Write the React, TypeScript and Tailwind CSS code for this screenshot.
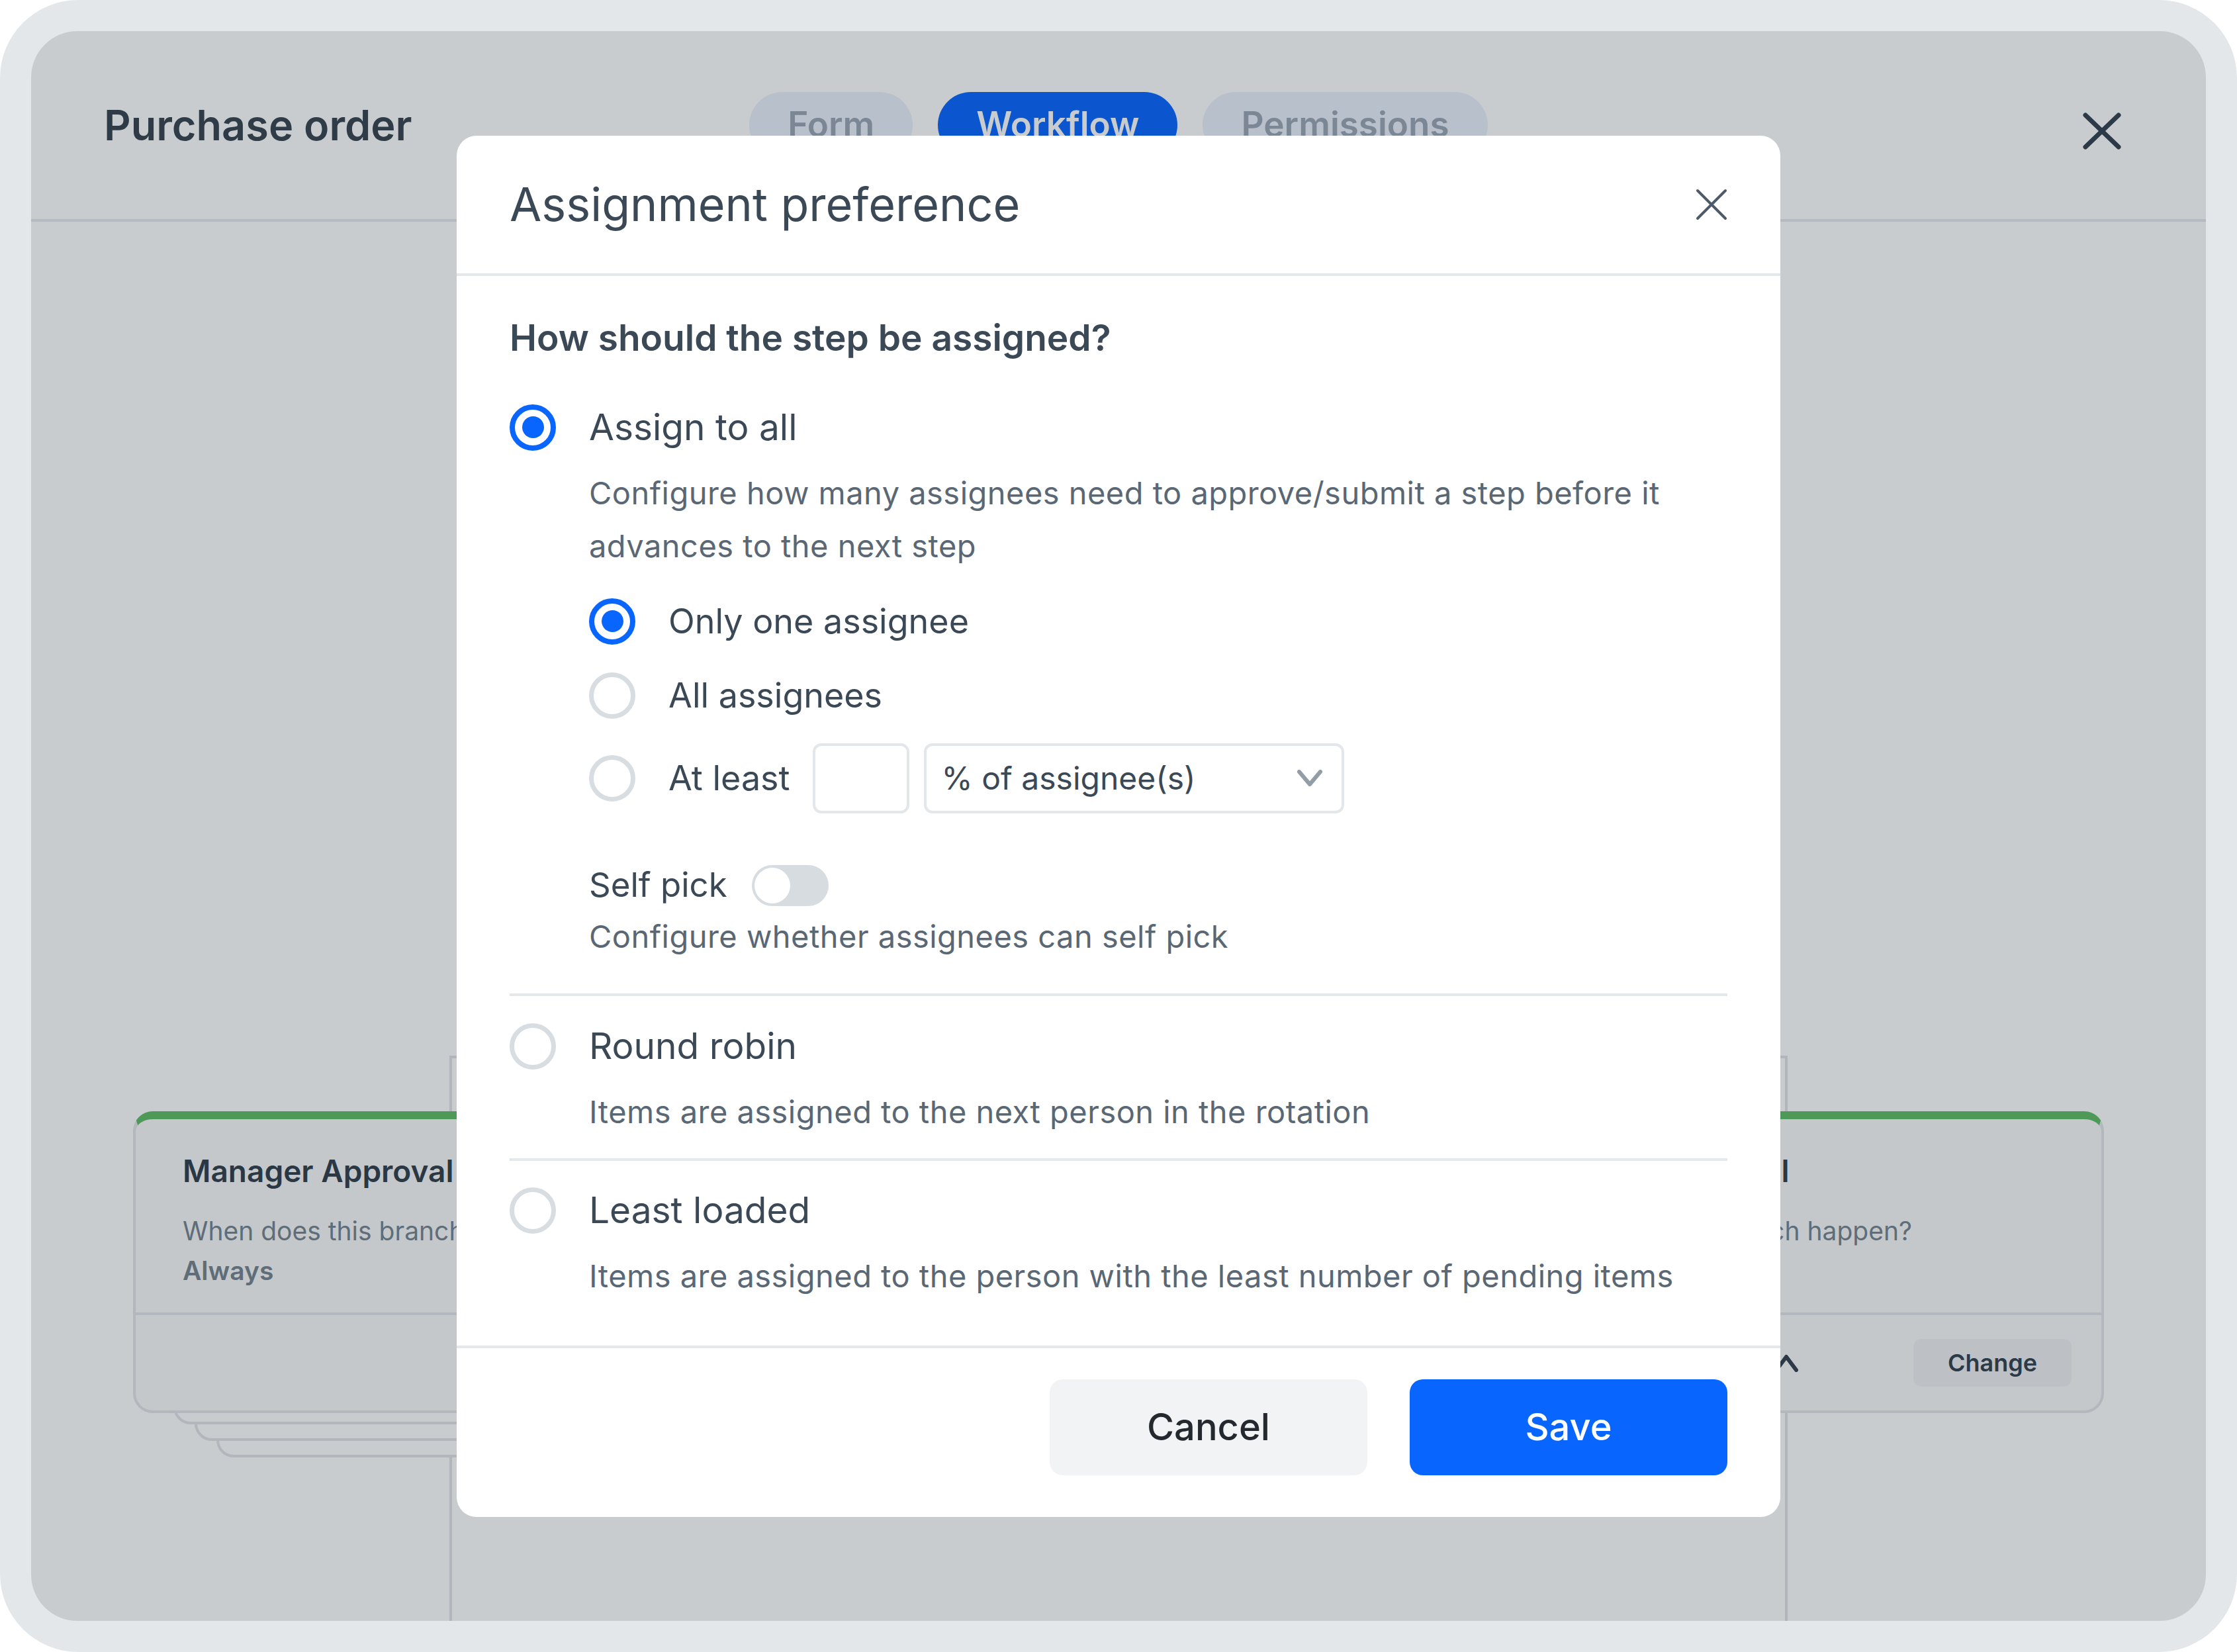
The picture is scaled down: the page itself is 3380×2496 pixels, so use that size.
import React from "react";

const Radio = ({ checked }: { checked?: boolean }) => {
    if (checked) {
        return (
            <span className="flex h-[70px] w-[70px] shrink-0 items-center justify-center rounded-full border-[8px] border-[#0866ff]">
                <span className="h-[33px] w-[33px] rounded-full bg-[#0866ff]" />
            </span>
        );
    }
    return <span className="h-[70px] w-[70px] shrink-0 rounded-full border-[7px] border-[#d8dde2] bg-white" />;
};

const Tab = ({ label, active }: { label: string; active?: boolean }) => (
    <div
        className={
            active
                ? "flex h-[100px] items-center rounded-full bg-[#0360ff] px-[58px] text-[53px] font-semibold text-white"
                : "flex h-[100px] items-center rounded-full bg-[#eaf0fa] px-[58px] text-[53px] font-semibold text-[#98a3b0]"
        }
    >
        {label}
    </div>
);

const ApprovalCard = ({ stacked, chevron }: { stacked?: boolean; chevron?: boolean }) => (
    <div className="relative z-10 mt-[84px] w-[960px]">
        {stacked && (
            <>
                <div className="absolute inset-x-[126px] top-[60px] -bottom-[67px] rounded-[26px] border-4 border-[#e0e3e7] bg-white" />
                <div className="absolute inset-x-[93px] top-[60px] -bottom-[42px] rounded-[26px] border-4 border-[#e0e3e7] bg-white" />
                <div className="absolute inset-x-[61px] top-[60px] -bottom-[17px] rounded-[26px] border-4 border-[#e0e3e7] bg-white" />
            </>
        )}
        <div className="relative rounded-[30px] border-4 border-t-[12px] border-[#e2e4e8] border-t-[#5cbb5f] bg-[#fafafa]">
            <div className="px-[71px] pt-[46px] pb-[33px]">
                <p className="text-[46px] leading-[64px] font-semibold text-[#2c3a47]">Manager Approval</p>
                <p className="mt-[29px] text-[39px] leading-[60px] text-[#73808c]">When does this branch happen?</p>
                <p className="text-[39px] leading-[60px] font-semibold text-[#73808c]">Always</p>
            </div>
            <div className="grid h-[148px] grid-cols-[1fr_auto_1fr] items-center border-t-4 border-[#e2e4e8] px-[45px]">
                <div />
                <div className="flex w-[40px] justify-center">
                    {chevron && (
                        <svg width="36" height="28" viewBox="0 0 36 28" fill="none">
                            <path d="M3 25 L18 5 L33 25" stroke="#2f3c4a" strokeWidth="6" strokeLinecap="round" strokeLinejoin="round" />
                        </svg>
                    )}
                </div>
                <button className="flex h-[72px] w-[239px] items-center justify-center justify-self-end rounded-[12px] bg-[#f0f1f3] text-[36px] font-semibold text-[#2f3c4a]">
                    Change
                </button>
            </div>
        </div>
    </div>
);

const BranchColumn = ({ stacked, chevron }: { stacked?: boolean; chevron?: boolean }) => (
    <div className="relative flex w-[960px] flex-col items-center">
        <div className="absolute top-0 bottom-0 left-1/2 w-[4px] -translate-x-1/2 bg-[#dfe2e6]" />
        <ApprovalCard stacked={stacked} chevron={chevron} />
    </div>
);

const App: React.FC = () => {
    return (
        <div className="h-screen w-full bg-white font-['Inter',sans-serif]">
            <div className="h-full w-full rounded-[118px] bg-[#e3e7ea] p-[47px]">
                <div className="relative flex h-full flex-col overflow-hidden rounded-[70px] bg-white">

                    {/* page header */}
                    <div className="grid h-[288px] shrink-0 grid-cols-[1fr_auto_1fr] items-center border-b-4 border-[#e5e7eb] px-[110px]">
                        <h1 className="text-[63px] font-semibold text-[#333f4b]">Purchase order</h1>
                        <div className="flex gap-[38px]">
                            <Tab label="Form" />
                            <Tab label="Workflow" active />
                            <Tab label="Permissions" />
                        </div>
                        <div className="mt-[18px] mr-[18px] justify-self-end">
                            <svg width="58" height="56" viewBox="0 0 58 56" fill="none">
                                <path d="M4 4 L54 52 M54 4 L4 52" stroke="#2f3c4a" strokeWidth="7" strokeLinecap="round" />
                            </svg>
                        </div>
                    </div>

                    {/* workflow canvas */}
                    <div className="flex flex-1 flex-col">
                        <div className="relative mx-[154px] mt-[1260px] flex flex-1 justify-between">
                            <div className="absolute top-0 right-[478px] left-[478px] h-[4px] bg-[#dfe2e6]" />
                            <BranchColumn stacked />
                            <BranchColumn chevron />
                        </div>
                    </div>

                    {/* modal */}
                    <div className="absolute inset-0 z-20 flex items-center justify-center bg-[rgba(35,51,63,0.25)]">
                        <div className="w-[2000px] overflow-hidden rounded-[30px] bg-white">
                            <div className="flex h-[212px] items-center justify-between border-b-4 border-[#e5e8eb] pr-[80px] pl-[80px]">
                                <h2 className="text-[70px] text-[#3b4856]">Assignment preference</h2>
                                <svg width="48" height="48" viewBox="0 0 48 48" fill="none">
                                    <path d="M3 3 L45 45 M45 3 L3 45" stroke="#4d5b69" strokeWidth="4" strokeLinecap="round" />
                                </svg>
                            </div>

                            <div className="pt-[54px] pr-[80px] pb-[65px] pl-[80px]">
                                <p className="text-[55px] leading-[78px] font-semibold text-[#3b4856]">How should the step be assigned?</p>

                                <div className="mt-[57px] flex h-[80px] items-center gap-[50px]">
                                    <Radio checked />
                                    <span className="text-[55px] text-[#3b4856]">Assign to all</span>
                                </div>
                                <div className="pl-[120px]">
                                    <p className="mt-[19px] text-[47px] leading-[80px] tracking-[0.01em] text-[#5a6774]">
                                        Configure how many assignees need to approve/submit a step before it advances to the next step
                                    </p>

                                    <div className="mt-[34px] flex h-[80px] items-center gap-[50px]">
                                        <Radio checked />
                                        <span className="text-[52px] text-[#3b4856]">Only one assignee</span>
                                    </div>
                                    <div className="mt-[32px] flex h-[80px] items-center gap-[50px]">
                                        <Radio />
                                        <span className="text-[52px] text-[#3b4856]">All assignees</span>
                                    </div>
                                    <div className="mt-[32px] flex h-[106px] items-center">
                                        <Radio />
                                        <span className="ml-[50px] text-[52px] text-[#3b4856]">At least</span>
                                        <div className="ml-[34px] h-[106px] w-[146px] rounded-[13px] border-4 border-[#e3e6ea]" />
                                        <div className="ml-[22px] flex h-[106px] w-[635px] items-center justify-between rounded-[13px] border-4 border-[#e3e6ea] pr-[28px] pl-[23px]">
                                            <span className="text-[48px] text-[#3b4856]">% of assignee(s)</span>
                                            <svg width="40" height="26" viewBox="0 0 40 26" fill="none">
                                                <path d="M4 3 L20 22 L36 3" stroke="#929da8" strokeWidth="6" strokeLinecap="round" strokeLinejoin="round" />
                                            </svg>
                                        </div>
                                    </div>

                                    <div className="mt-[73px] flex h-[72px] items-center gap-[37px]">
                                        <span className="text-[51px] text-[#3b4856]">Self pick</span>
                                        <div className="flex h-[62px] w-[116px] items-center rounded-full bg-[#d6dce0] p-[4px]">
                                            <span className="h-[54px] w-[54px] rounded-full bg-white" />
                                        </div>
                                    </div>
                                    <p className="mt-[1px] text-[47px] leading-[80px] tracking-[0.01em] text-[#5a6774]">Configure whether assignees can self pick</p>
                                </div>

                                <div className="mt-[46px] h-[4px] bg-[#e5e8eb]" />

                                <div className="mt-[36px] flex h-[80px] items-center gap-[50px]">
                                    <Radio />
                                    <span className="text-[55px] text-[#3b4856]">Round robin</span>
                                </div>
                                <p className="mt-[19px] pl-[120px] text-[47px] leading-[80px] tracking-[0.01em] text-[#5a6774]">
                                    Items are assigned to the next person in the rotation
                                </p>

                                <div className="mt-[30px] h-[4px] bg-[#e5e8eb]" />

                                <div className="mt-[35px] flex h-[80px] items-center gap-[50px]">
                                    <Radio />
                                    <span className="text-[55px] text-[#3b4856]">Least loaded</span>
                                </div>
                                <p className="mt-[19px] pl-[120px] text-[47px] leading-[80px] tracking-[0.01em] text-[#5a6774]">
                                    Items are assigned to the person with the least number of pending items
                                </p>
                            </div>

                            <div className="flex justify-end gap-[64px] border-t-4 border-[#e5e8eb] pt-[47px] pr-[80px] pb-[63px]">
                                <button className="h-[145px] w-[480px] rounded-[20px] bg-[#f2f3f5] text-[56px] font-medium text-[#23292f]">Cancel</button>
                                <button className="h-[145px] w-[480px] rounded-[20px] bg-[#0866ff] text-[56px] font-medium text-white">Save</button>
                            </div>
                        </div>
                    </div>

                </div>
            </div>
        </div>
    );
};

export default App;
